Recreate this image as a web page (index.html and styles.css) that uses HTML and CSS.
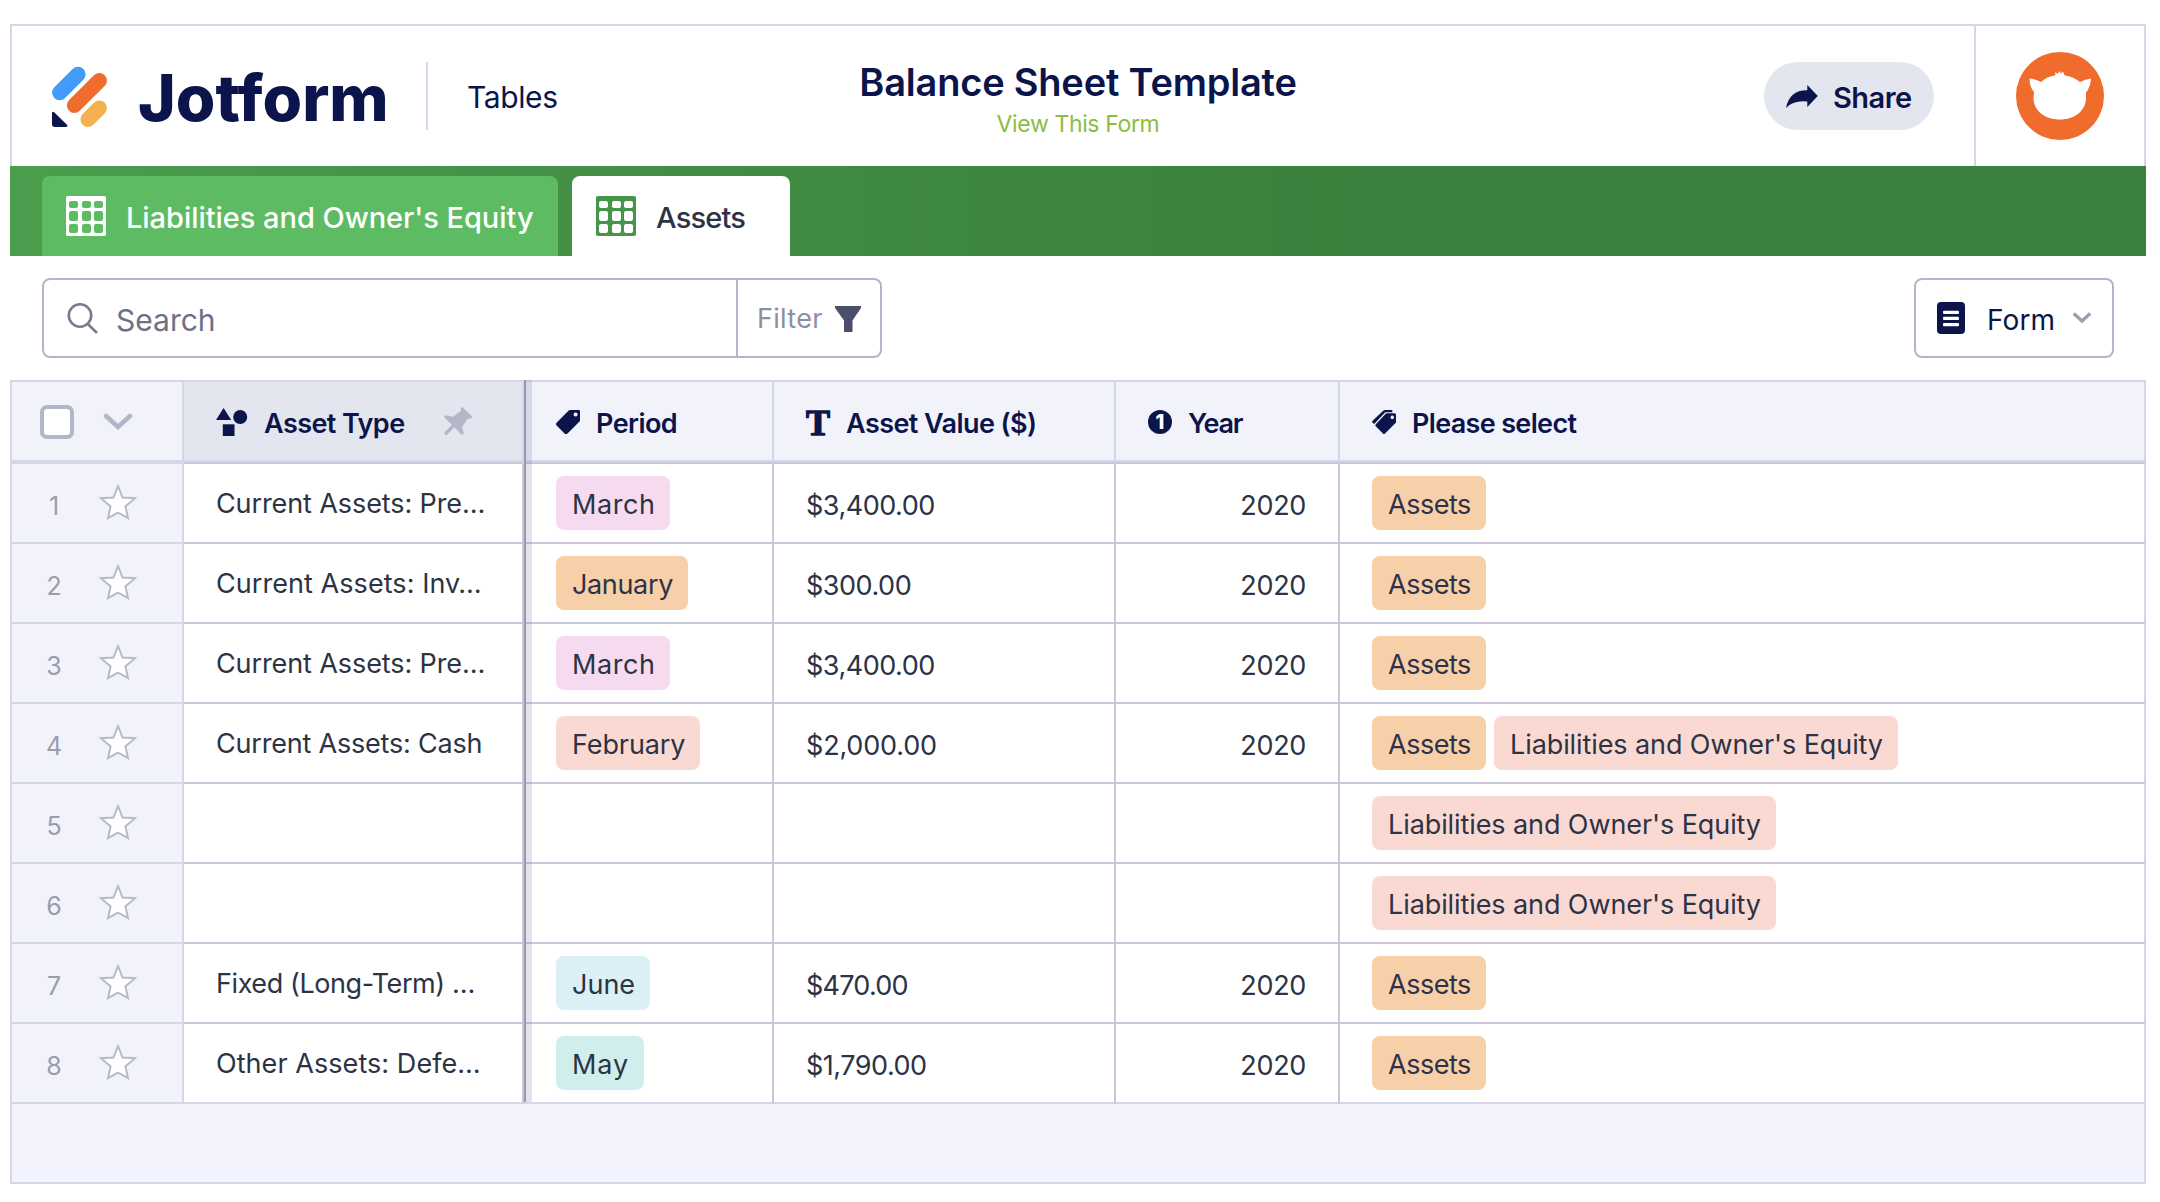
FILE: index.html
```html
<!DOCTYPE html>
<html lang="en">
<head>
<meta charset="utf-8">
<title>Balance Sheet Template</title>
<link rel="stylesheet" href="styles.css">
</head>
<body>
<svg class="sprite" aria-hidden="true">
  <symbol id="star" viewBox="0 0 38 38"><path d="M19 3 L23.5 14.5 L36 15.2 L26.4 23.4 L29 35 L19 29.6 L9 35 L11.6 23.4 L2 15.2 L14.5 14.5 Z" fill="#fff" stroke="#b8bacb" stroke-width="2"/></symbol>
  <symbol id="grid" viewBox="0 0 40 40"><path fill="currentColor" fill-rule="evenodd" d="M2 0H38a2 2 0 0 1 2 2V38a2 2 0 0 1-2 2H2a2 2 0 0 1-2-2V2a2 2 0 0 1 2-2ZM5 5a2 2 0 0 0-2 2v3a2 2 0 0 0 2 2h5a2 2 0 0 0 2-2v-3a2 2 0 0 0-2-2ZM18 5a2 2 0 0 0-2 2v3a2 2 0 0 0 2 2h5a2 2 0 0 0 2-2v-3a2 2 0 0 0-2-2ZM30 5a2 2 0 0 0-2 2v3a2 2 0 0 0 2 2h5a2 2 0 0 0 2-2v-3a2 2 0 0 0-2-2ZM5 15a2 2 0 0 0-2 2v6a2 2 0 0 0 2 2h5a2 2 0 0 0 2-2v-6a2 2 0 0 0-2-2ZM18 15a2 2 0 0 0-2 2v6a2 2 0 0 0 2 2h5a2 2 0 0 0 2-2v-6a2 2 0 0 0-2-2ZM30 15a2 2 0 0 0-2 2v6a2 2 0 0 0 2 2h5a2 2 0 0 0 2-2v-6a2 2 0 0 0-2-2ZM5 28a2 2 0 0 0-2 2v5a2 2 0 0 0 2 2h5a2 2 0 0 0 2-2v-5a2 2 0 0 0-2-2ZM18 28a2 2 0 0 0-2 2v5a2 2 0 0 0 2 2h5a2 2 0 0 0 2-2v-5a2 2 0 0 0-2-2ZM30 28a2 2 0 0 0-2 2v5a2 2 0 0 0 2 2h5a2 2 0 0 0 2-2v-5a2 2 0 0 0-2-2Z"/></symbol>
</svg>
<div class="app">
  <header class="header">
    <svg class="logo" viewBox="0 0 56 62" fill="none" stroke-linecap="round" stroke-width="15.2">
      <path d="M7.7 26.6 L26 8.4" stroke="#429bf9"/>
      <path d="M22.4 39.3 L47.3 14.7" stroke="#f06c2c"/>
      <path d="M36 53.3 L47.3 42.2" stroke="#f4b152"/>
      <path d="M0 47.5 Q0 44.5 2.4 46.4 L15 58.8 Q16.2 61 13.5 61 H3 Q0 61 0 58 Z" fill="#0b154b"/>
    </svg>
    <span class="wordmark">Jotform</span>
    <span class="product">Tables</span>
    <div class="title-block">
      <h1 class="title">Balance Sheet Template</h1>
      <a class="view-form">View This Form</a>
    </div>
    <button class="share">
      <svg width="32" height="23" viewBox="0 0 32 23"><path d="M0 23 Q3.5 5 21.3 5.3 V0 L31.8 11 L21.3 22 V16.6 Q7.5 15 0 23Z" fill="#0b154b"/></svg>
      <span>Share</span>
    </button>
    <div class="account">
      <svg width="88" height="88" viewBox="0 0 88 88">
        <circle cx="44" cy="44" r="44" fill="#f06c2c"/>
        <path fill="#fff" d="M13.5 26.5 Q19 27 25 30 Q31 24.5 39.5 23.2 L39 20.3 L42 21.8 L43.6 19 L45 21.8 L46.8 19.3 L48.5 23.2 Q57 24.5 64 30 Q70 27 75 26.5 Q74.500 35 70 40.500 V46 C70 59 58 67.500 44 67.500 C29.500 67.500 17.500 59 17.500 46 L18 40 Q13.500 35 13.500 26.500Z"/>
      </svg>
    </div>
  </header>

  <nav class="tabs">
    <a class="tab"><svg width="40" height="40"><use href="#grid"/></svg><span>Liabilities and Owner's Equity</span></a>
    <a class="tab tab--active"><svg width="40" height="40"><use href="#grid"/></svg><span>Assets</span></a>
  </nav>

  <div class="toolbar">
    <div class="search">
      <div class="search__field">
        <svg width="32" height="32" viewBox="0 0 32 32" fill="none" stroke="#787b90" stroke-width="2.600"><circle cx="13" cy="13.500" r="11.200"/><path d="M20.800 22 L30 31"/></svg>
        <span>Search</span>
      </div>
      <div class="search__filter">
        <span>Filter</span>
        <svg width="26" height="26" viewBox="0 0 26 26"><path d="M0 0H26V2L17.500 14.500V26H9V14.500L0 2Z" fill="#4c4f69"/></svg>
      </div>
    </div>
    <button class="form-button">
      <svg width="28" height="32" viewBox="0 0 28 32"><rect width="28" height="32" rx="4" fill="#0b154b"/><g fill="#fff"><rect x="6" y="8.700" width="16" height="3.200" rx="1"/><rect x="6" y="14.800" width="16" height="3.200" rx="1"/><rect x="6" y="21" width="16" height="3.200" rx="1"/></g></svg>
      <span>Form</span>
      <svg class="caret" width="20" height="12" viewBox="0 0 20 12" fill="none" stroke="#9c9eb2" stroke-width="3.400"><path d="M1.800 1.500 L10 9 L18.200 1.500"/></svg>
    </button>
  </div>

  <main class="table">
    <div class="row row--head">
      <div class="cell cell--tools"><span class="checkbox"></span><svg width="30" height="18" viewBox="0 0 30 18" fill="none" stroke="#b3b5c8" stroke-width="4.600" stroke-linecap="round"><path d="M3 3 L15 14 L27 3"/></svg></div>
      <div class="cell cell--pinned">
        <svg width="32" height="28" viewBox="0 0 32 28" fill="#0b154b"><path d="M7.600 0 L15.200 12 H0Z"/><circle cx="24.200" cy="9" r="7"/><rect x="6.800" y="16.300" width="11.700" height="11.700"/></svg>
        <span class="label">Asset Type</span>
        <svg class="pin" width="29" height="29" viewBox="0 0 29 29" fill="#b5b7c9"><path d="M17 1 L18.500 0 L28.500 10 L27.500 11.500 L24 11.500 L18.200 19.500 L19.800 26.500 L18 28 L0 10 L1.500 8.300 L9 9.700 L17 3.800Z"/><path d="M2 26.300 L9.500 18.600" stroke="#b5b7c9" stroke-width="3.400" stroke-linecap="round"/></svg>
      </div>
      <div class="cell cell--period">
        <svg width="24" height="24" viewBox="0 0 24 24"><path fill="#0b154b" fill-rule="evenodd" d="M12.700 0.500 Q13.200 0 14 0 H22.800 Q24 0 24 1.200 V10 Q24 10.800 23.500 11.400 L11.500 23.400 Q10 24.500 8.500 23.400 L0.600 15.500 Q-0.500 14 0.600 12.700ZM19.600 2.400a2 2 0 1 0 0.010 0Z"/></svg>
        <span class="label">Period</span>
      </div>
      <div class="cell"><span class="type-text">T</span><span class="label">Asset Value ($)</span></div>
      <div class="cell"><span class="type-number">1</span><span class="label label--year">Year</span></div>
      <div class="cell cell--last">
        <svg width="24" height="24" viewBox="0 0 24 24"><path fill="#0b154b" d="M11.500 0.500 Q12.100 0 13 0 H20.300 V2.200 H13.300 L2.200 14 L0.600 12.800 Q-0.300 11.800 0.600 10.700Z"/><path fill="#0b154b" fill-rule="evenodd" d="M14.200 3.200 H22.500 Q24 3.200 24 5 V12.500 L13 23.400 Q12 24.500 10.900 23.400 L4 16.600 Q2.800 15.300 3.800 14.200ZM20.300 5.600a1.700 1.700 0 1 0 0.010 0Z"/></svg>
        <span class="label label--select">Please select</span>
      </div>
    </div>

    <div class="row">
      <div class="cell cell--tools"><span class="index">1</span><svg width="38" height="38"><use href="#star"/></svg></div>
      <div class="cell cell--name">Current Assets: Pre…</div>
      <div class="cell cell--period"><span class="tag tag--march">March</span></div>
      <div class="cell cell--value">$3,400.00</div>
      <div class="cell cell--year">2020</div>
      <div class="cell cell--last"><span class="tag tag--assets">Assets</span></div>
    </div>
    <div class="row">
      <div class="cell cell--tools"><span class="index">2</span><svg width="38" height="38"><use href="#star"/></svg></div>
      <div class="cell cell--name cell--name-wide">Current Assets: Inv…</div>
      <div class="cell cell--period"><span class="tag tag--january">January</span></div>
      <div class="cell cell--value">$300.00</div>
      <div class="cell cell--year">2020</div>
      <div class="cell cell--last"><span class="tag tag--assets">Assets</span></div>
    </div>
    <div class="row">
      <div class="cell cell--tools"><span class="index">3</span><svg width="38" height="38"><use href="#star"/></svg></div>
      <div class="cell cell--name">Current Assets: Pre…</div>
      <div class="cell cell--period"><span class="tag tag--march">March</span></div>
      <div class="cell cell--value">$3,400.00</div>
      <div class="cell cell--year">2020</div>
      <div class="cell cell--last"><span class="tag tag--assets">Assets</span></div>
    </div>
    <div class="row">
      <div class="cell cell--tools"><span class="index">4</span><svg width="38" height="38"><use href="#star"/></svg></div>
      <div class="cell cell--name cell--name-snug">Current Assets: Cash</div>
      <div class="cell cell--period"><span class="tag tag--february">February</span></div>
      <div class="cell cell--value cell--value-wide">$2,000.00</div>
      <div class="cell cell--year">2020</div>
      <div class="cell cell--last"><span class="tag tag--assets">Assets</span><span class="tag tag--liabilities">Liabilities and Owner's Equity</span></div>
    </div>
    <div class="row">
      <div class="cell cell--tools"><span class="index">5</span><svg width="38" height="38"><use href="#star"/></svg></div>
      <div class="cell cell--name"></div>
      <div class="cell cell--period"></div>
      <div class="cell cell--value"></div>
      <div class="cell cell--year"></div>
      <div class="cell cell--last"><span class="tag tag--liabilities">Liabilities and Owner's Equity</span></div>
    </div>
    <div class="row">
      <div class="cell cell--tools"><span class="index">6</span><svg width="38" height="38"><use href="#star"/></svg></div>
      <div class="cell cell--name"></div>
      <div class="cell cell--period"></div>
      <div class="cell cell--value"></div>
      <div class="cell cell--year"></div>
      <div class="cell cell--last"><span class="tag tag--liabilities">Liabilities and Owner's Equity</span></div>
    </div>
    <div class="row">
      <div class="cell cell--tools"><span class="index">7</span><svg width="38" height="38"><use href="#star"/></svg></div>
      <div class="cell cell--name cell--name-tight">Fixed (Long-Term) …</div>
      <div class="cell cell--period"><span class="tag tag--june">June</span></div>
      <div class="cell cell--value cell--value-tight">$470.00</div>
      <div class="cell cell--year">2020</div>
      <div class="cell cell--last"><span class="tag tag--assets">Assets</span></div>
    </div>
    <div class="row row--end">
      <div class="cell cell--tools"><span class="index">8</span><svg width="38" height="38"><use href="#star"/></svg></div>
      <div class="cell cell--name cell--name-wide">Other Assets: Defe…</div>
      <div class="cell cell--period"><span class="tag tag--may">May</span></div>
      <div class="cell cell--value">$1,790.00</div>
      <div class="cell cell--year">2020</div>
      <div class="cell cell--last"><span class="tag tag--assets">Assets</span></div>
    </div>
    <div class="table__footer"></div>
    <div class="freeze-line"></div>
  </main>
</div>
</body>
</html>
```
FILE: styles.css
```css
* { box-sizing: border-box; }

body {
  margin: 0;
  background: #fff;
  color: #2c3345;
  font: 400 27px/34px Inter, "Liberation Sans", sans-serif;
}

svg { display: block; flex: none; }
button { font: inherit; background: none; border: 0; padding: 0; }
.sprite { position: absolute; width: 0; height: 0; }

.app { width: 2136px; margin: 24px 0 0 10px; }

/* Header */
.header {
  position: relative;
  display: flex;
  align-items: center;
  height: 142px;
  padding-left: 40px;
  border: 2px solid #d5d6e8;
  border-bottom: 0;
  color: #0b154b;
}
.logo { width: 56px; height: 62px; margin-top: 1px; }
.wordmark {
  margin: 3px 0 0 30px;
  width: 288px;
  height: 64px;
  font-weight: 800;
  font-size: 64px;
  line-height: 64px;
}
.product {
  height: 68px;
  padding: 1px 0 0 39px;
  border-left: 2px solid #d5d6e8;
  font-size: 30px;
  line-height: 68px;
  letter-spacing: -0.4px;
}
.title-block {
  position: absolute;
  left: 0;
  right: 0;
  top: 32px;
  text-align: center;
}
.title {
  margin: 0;
  font-weight: 600;
  font-size: 38px;
  line-height: 48px;
  letter-spacing: -0.2px;
}
.view-form {
  display: block;
  margin-top: 3px;
  color: #8bbd3f;
  font-size: 23px;
  line-height: 30px;
  letter-spacing: -0.37px;
}
.share {
  display: flex;
  align-items: center;
  gap: 15px;
  width: 170px;
  height: 68px;
  margin-left: auto;
  padding-left: 22px;
  border-radius: 34px;
  background: #e3e5ef;
  color: #0b154b;
  font-weight: 600;
  font-size: 29px;
  letter-spacing: -0.54px;
}
.share span { padding-top: 4px; }
.account {
  width: 170px;
  height: 140px;
  margin-left: 40px;
  padding: 26px 0 0 40px;
  border-left: 2px solid #d5d6e8;
}

/* Tabs */
.tabs {
  display: flex;
  gap: 14px;
  height: 90px;
  padding: 10px 32px 0;
  background: linear-gradient(90deg, #4a9e4e 0, #3f8841 42%, #3b803c 65%);
}
.tab {
  display: flex;
  align-items: center;
  width: 516px;
  padding-left: 24px;
  border-radius: 8px 8px 0 0;
  background: #5dbc63;
  color: #fff;
  font-weight: 500;
  font-size: 29px;
}
.tab span { margin: 4px 0 0 20px; letter-spacing: -0.04px; white-space: nowrap; }
.tab--active { width: 218px; background: #fff; color: #45964a; }
.tab--active span { color: #2c3345; letter-spacing: -0.8px; }

/* Toolbar */
.toolbar {
  display: flex;
  justify-content: space-between;
  height: 124px;
  padding: 22px 32px;
}
.search { display: flex; width: 840px; border: 2px solid #b3b5c8; border-radius: 8px; }
.search__field {
  display: flex;
  align-items: center;
  width: 694px;
  padding-left: 23px;
  border-right: 2px solid #b3b5c8;
  color: #6e7085;
  font-size: 30px;
}
.search__field span { margin: 3px 0 0 17px; }
.search__filter { display: flex; align-items: center; padding-left: 19px; color: #8c8ea5; letter-spacing: 0.3px; }
.search__filter span { margin-top: 2px; }
.search__filter svg { margin: 2px 0 0 12px; }
.form-button {
  display: flex;
  align-items: center;
  width: 200px;
  border: 2px solid #b3b5c8;
  border-radius: 8px;
  padding-left: 21px;
  color: #0b154b;
  font-size: 28px;
  letter-spacing: 0.1px;
}
.form-button span { margin: 4px 0 0 22px; }
.caret { margin-left: 17px; }

/* Table */
.table { position: relative; border-top: 2px solid #d5d6e8; }
.row {
  display: grid;
  grid-template-columns: 174px 340px 250px 342px 224px 806px;
  height: 80px;
}
.cell {
  display: flex;
  align-items: center;
  padding: 2px 32px 0 32px;
  border-right: 2px solid #c6c8d9;
  border-bottom: 2px solid #c6c8d9;
  white-space: nowrap;
}
.cell--last { border-right-color: #d5d6e8; gap: 8px; }
.cell--tools {
  padding: 0;
  border: 2px solid #d5d6e8;
  border-top: 0;
  background: #f2f2fb;
}
.cell--tools .index {
  width: 84px;
  margin: 5px 3px 0 0;
  color: #9a9cae;
  font-size: 25px;
  text-align: center;
}
.cell--tools use { transform: translateY(-1px); }
.cell--name { padding-top: 1px; letter-spacing: -0.1px; }
.cell--name-wide { letter-spacing: 0.06px; }
.cell--name-snug { letter-spacing: -0.2px; }
.cell--name-tight { letter-spacing: -0.42px; }
.cell--value { padding-top: 5px; letter-spacing: -0.48px; }
.cell--value-wide { letter-spacing: -0.18px; }
.cell--value-tight { letter-spacing: -0.75px; }
.cell--year { padding-top: 5px; justify-content: flex-end; letter-spacing: -0.32px; }
.row--end .cell { border-bottom-color: #d5d6e8; }

.row--head { height: 82px; color: #0b154b; }
.row--head .cell {
  padding-top: 0;
  padding-bottom: 0;
  border-right-color: #d5d6e8;
  background: #f2f2fb;
  box-shadow: inset 0 -2px #d5d6e8;
}
.row--head .cell--tools { border-bottom-color: #d5d6e8; }
.row--head .cell--pinned { background: #e3e5ef; }
.label { margin: 3px 0 0 16px; font-weight: 600; letter-spacing: -0.57px; }
.row--head .cell--last { gap: 0; }
.label--year { letter-spacing: -1.2px; }
.label--select { letter-spacing: -0.66px; }
.pin { margin-left: 39px; margin-top: -2px; }
.type-text {
  width: 24px;
  margin-top: 2px;
  font: 700 36px/36px "Liberation Serif", serif;
  -webkit-text-stroke: 1.4px #0b154b;
}
.type-number {
  width: 24px;
  height: 24px;
  border-radius: 50%;
  background: #0b154b;
  color: #fff;
  font: 800 20px/24px Inter, sans-serif;
  text-align: center;
}
.checkbox {
  width: 34px;
  height: 34px;
  margin: 0 29px 0 28px;
  border: 4px solid #b3b5c8;
  border-radius: 7px;
  background: #fff;
}

.tag {
  height: 54px;
  margin-bottom: 2px;
  padding: 1px 0 0 16px;
  border-radius: 8px;
  line-height: 56px;
}
.tag--march { width: 114px; background: #f6dbf0; letter-spacing: 0.6px; }
.tag--january { width: 132px; background: #f7cfa8; letter-spacing: -0.35px; }
.tag--february { width: 144px; background: #fad9d2; letter-spacing: -0.1px; }
.tag--june { width: 94px; background: #daf0f5; }
.tag--may { width: 88px; background: #d0eeec; letter-spacing: 0.9px; }
.tag--assets { width: 114px; background: #f7cfa8; letter-spacing: -0.49px; }
.tag--liabilities { width: 404px; background: #fad9d2; letter-spacing: -0.09px; }

.table__footer {
  height: 80px;
  border: 2px solid #d5d6e8;
  border-top: 0;
  background: #f3f3fd;
}

/* Edge of the pinned column, over the cell borders */
.freeze-line {
  position: absolute;
  left: 514px;
  top: -2px;
  width: 8px;
  height: 722px;
  border-left: 2px solid #9799ad;
  background: rgba(140, 142, 175, 0.25);
}
```
